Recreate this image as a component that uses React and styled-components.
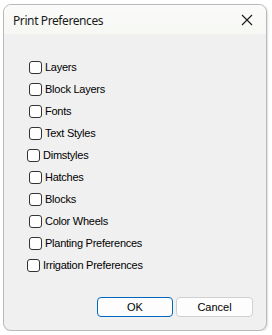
import styled, { createGlobalStyle } from "styled-components";

const GlobalStyle = createGlobalStyle`
  html, body {
    margin: 0;
    padding: 0;
    background: #ffffff;
  }
`;

const items = [
  { label: "Layers" },
  { label: "Block Layers" },
  { label: "Fonts" },
  { label: "Text Styles" },
  { label: "Dimstyles", shift: 2 },
  { label: "Hatches" },
  { label: "Blocks" },
  { label: "Color Wheels" },
  { label: "Planting Preferences" },
  { label: "Irrigation Preferences", shift: 2 },
];

const App = () => {
  return (
    <>
      <GlobalStyle />
      <StyledWindow>
        <StyledTitleBar>
          <StyledTitle>Print Preferences</StyledTitle>
          <StyledClose aria-label="Close">
            <svg width="12" height="12" viewBox="0 0 12 12">
              <path d="M1 1 L11 11 M11 1 L1 11" stroke="#1a1a1a" strokeWidth="1.1" />
            </svg>
          </StyledClose>
        </StyledTitleBar>
        <StyledBody>
          <StyledList>
            {items.map((item) => (
              <StyledRow key={item.label} $shift={item.shift || 0}>
                <StyledBox />
                <StyledLabel>{item.label}</StyledLabel>
              </StyledRow>
            ))}
          </StyledList>
          <StyledFooter>
            <StyledButton $primary>OK</StyledButton>
            <StyledButton>Cancel</StyledButton>
          </StyledFooter>
        </StyledBody>
      </StyledWindow>
    </>
  );
};

export default App;

const StyledWindow = styled.div`
  margin: 4px 0 0 3px;
  width: 264px;
  height: 327px;
  box-sizing: border-box;
  border: 1px solid #b9b9b9;
  border-radius: 8px;
  overflow: hidden;
  display: flex;
  flex-direction: column;
  background: #f0f0f0;
  box-shadow: 1px 1px 2px rgba(0, 0, 0, 0.12);
`;

const StyledTitleBar = styled.div`
  height: 29px;
  flex: none;
  display: flex;
  align-items: center;
  justify-content: space-between;
  padding: 0 0 0 9px;
  background: linear-gradient(180deg, #fbfbfa 0%, #f6f8f4 100%);
`;

const StyledTitle = styled.span`
  font-family: "Noto Sans", "Open Sans", sans-serif;
  font-size: 12px;
  letter-spacing: -0.4px;
  color: #1a1a1a;
  margin-top: 1px;
`;

const StyledClose = styled.div`
  width: 34px;
  height: 29px;
  display: flex;
  align-items: center;
  justify-content: center;
  margin-right: 2px;
`;

const StyledBody = styled.div`
  flex: 1;
  display: flex;
  flex-direction: column;
  justify-content: space-between;
`;

const StyledList = styled.div`
  display: flex;
  flex-direction: column;
  padding: 22px 0 0 25px;
`;

const StyledRow = styled.label`
  height: 22px;
  display: flex;
  align-items: center;
  gap: 3px;
  margin-left: ${(props) => -props.$shift}px;
`;

const StyledBox = styled.span`
  width: 13px;
  height: 13px;
  box-sizing: border-box;
  border: 1px solid #333333;
  border-radius: 3px;
  background: #ffffff;
  flex: none;
`;

const StyledLabel = styled.span`
  font-family: "Liberation Sans", Arial, sans-serif;
  font-size: 11px;
  letter-spacing: -0.25px;
  color: #000000;
`;

const StyledFooter = styled.div`
  display: flex;
  justify-content: flex-end;
  gap: 3px;
  padding: 0 13px 13px 0;
`;

const StyledButton = styled.button`
  width: 77px;
  height: 20px;
  box-sizing: border-box;
  border: 1px solid ${(props) => (props.$primary ? "#0067c0" : "#d0d0d0")};
  border-radius: 4px;
  background: #fdfdfd;
  font-family: "Liberation Sans", Arial, sans-serif;
  font-size: 11px;
  color: #000000;
  padding: 0;
  &:first-child {
    width: 76px;
  }
`;
